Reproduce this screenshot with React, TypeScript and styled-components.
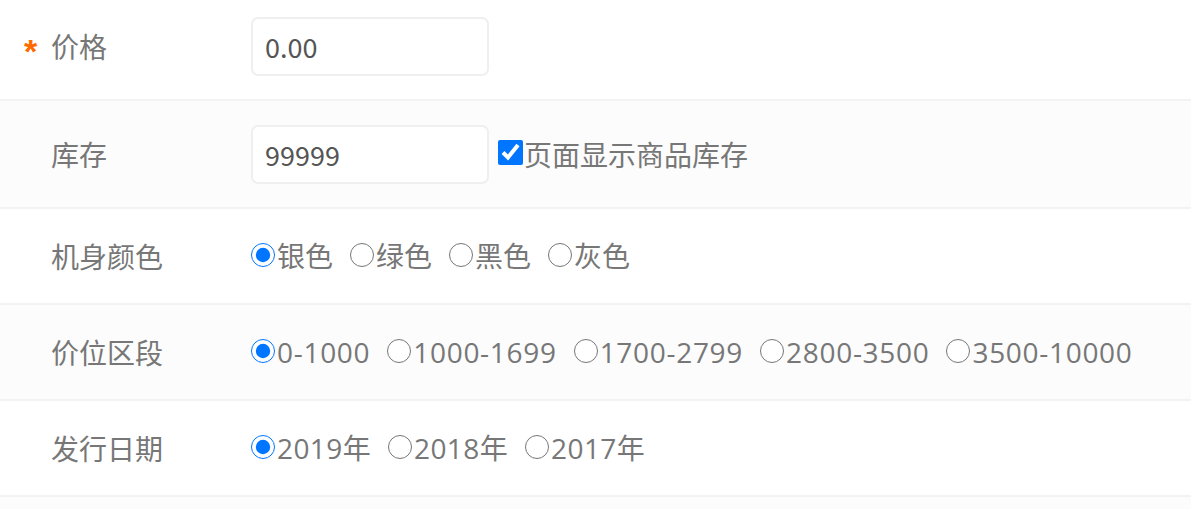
import React from "react";
import styled, { createGlobalStyle } from "styled-components";

const Global = createGlobalStyle`
  html, body { margin: 0; padding: 0; background: #fff; }
  body { font-family: "Noto Sans CJK SC", "Noto Sans", sans-serif; }
`;

const Form = styled.div`
  display: flex;
  flex-direction: column;
`;

const Row = styled.div<{ $alt?: boolean }>`
  display: grid;
  grid-template-columns: 27px 200px 1fr;
  align-items: center;
  padding: 24px 0 23px 24px;
  background: ${(p) => (p.$alt ? "#fcfcfc" : "#ffffff")};
  border-bottom: 2px solid #f3f3f3;
  &:first-child { padding-top: 17px; }
`;

const Star = styled.span`
  color: #ff6a00;
  font-size: 34px;
  line-height: 1;
  font-family: "Liberation Sans", sans-serif;
  font-weight: bold;
  padding-top: 8px;
`;

const Label = styled.span`
  color: #777;
  font-size: 28px;
  line-height: 45px;
`;

const Content = styled.div<{ $tall?: boolean }>`
  display: flex;
  align-items: center;
  min-height: ${(p) => (p.$tall ? "47px" : "45px")};
`;

const TextInput = styled.input`
  box-sizing: border-box;
  width: 238px;
  height: 59px;
  border: 2px solid #efefef;
  border-radius: 7px;
  padding: 0 12px;
  font-family: "Noto Sans CJK SC", "Noto Sans", sans-serif;
  font-size: 27px;
  color: #555;
  background: #fff;
  outline: none;
`;

const CheckLabel = styled.label`
  display: flex;
  align-items: center;
  margin-left: 9px;
  color: #777;
  font-size: 28px;
  line-height: 45px;
`;

const Check = styled.input`
  width: 25px;
  height: 25px;
  margin: 0 1px 4px 0;
  accent-color: #0075ff;
`;

const Options = styled.div`
  display: flex;
  align-items: center;
  gap: 17px;
`;

const Option = styled.label<{ $spacing: number }>`
  display: flex;
  align-items: center;
  color: #777;
  font-family: "Open Sans", "Noto Sans CJK SC", sans-serif;
  letter-spacing: ${(p) => p.$spacing}px;
  font-size: 28px;
  line-height: 45px;
`;

const Radio = styled.input`
  width: 24px;
  height: 24px;
  margin: 0 2px 4px 0;
  accent-color: #0075ff;
`;

type RadioRowProps = {
  name: string;
  label: string;
  options: string[];
  alt?: boolean;
  spacing?: number;
};

const RadioRow = ({ name, label, options, alt, spacing = 0 }: RadioRowProps) => (
  <Row $alt={alt}>
    <span />
    <Label>{label}</Label>
    <Content $tall>
      <Options>
        {options.map((o, i) => (
          <Option key={o} $spacing={spacing}>
            <Radio type="radio" name={name} defaultChecked={i === 0} />
            {o}
          </Option>
        ))}
      </Options>
    </Content>
  </Row>
);

export default function App() {
  return (
    <>
      <Global />
      <Form>
        <Row>
          <Star>*</Star>
          <Label>价格</Label>
          <Content>
            <TextInput defaultValue="0.00" />
          </Content>
        </Row>
        <Row $alt>
          <span />
          <Label>库存</Label>
          <Content>
            <TextInput defaultValue="99999" />
            <CheckLabel>
              <Check type="checkbox" defaultChecked />
              页面显示商品库存
            </CheckLabel>
          </Content>
        </Row>
        <RadioRow name="color" label="机身颜色" options={["银色", "绿色", "黑色", "灰色"]} />
        <RadioRow
          name="price"
          label="价位区段"
          alt
          spacing={0.7}
          options={["0-1000", "1000-1699", "1700-2799", "2800-3500", "3500-10000"]}
        />
        <RadioRow
          name="date"
          label="发行日期"
          spacing={0.4}
          options={["2019年", "2018年", "2017年"]}
        />
        <Row $alt>
          <span />
          <Label>&nbsp;</Label>
          <Content $tall />
        </Row>
      </Form>
    </>
  );
}
